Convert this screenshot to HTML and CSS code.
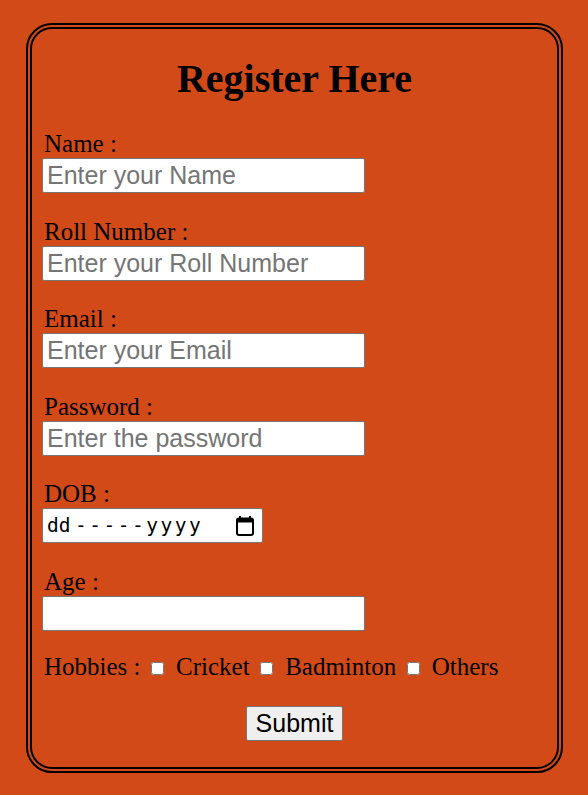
FILE: index.html
```html
<!DOCTYPE html>
<html lang="en">
<head>
<meta charset="utf-8">
<title>Register Here</title>
<link rel="stylesheet" href="styles.css">
</head>
<body>
<form class="card">
  <h1 class="title">Register Here</h1>
  <div class="fields">
    <div class="field">
      <label class="label" for="name">Name :</label>
      <input class="input" id="name" type="text" placeholder="Enter your Name">
    </div>
    <div class="field">
      <label class="label" for="roll">Roll Number :</label>
      <input class="input" id="roll" type="text" placeholder="Enter your Roll Number">
    </div>
    <div class="field">
      <label class="label" for="email">Email :</label>
      <input class="input" id="email" type="text" placeholder="Enter your Email">
    </div>
    <div class="field">
      <label class="label" for="pass">Password :</label>
      <input class="input" id="pass" type="text" placeholder="Enter the password">
    </div>
    <div class="field">
      <label class="label">DOB :</label>
      <div class="date-field">
        <span class="date-text"><span class="date-dd">dd</span><span class="date-rest">-----yyyy</span></span>
        <svg class="cal-icon" viewBox="0 0 18 20" width="18" height="20" aria-hidden="true">
          <rect x="3" y="0" width="2" height="4" fill="#000"/>
          <rect x="13" y="0" width="2" height="4" fill="#000"/>
          <rect x="1" y="2.5" width="16" height="16.5" rx="2" fill="none" stroke="#000" stroke-width="2"/>
          <rect x="1" y="2.5" width="16" height="4" fill="#000"/>
        </svg>
      </div>
    </div>
    <div class="field">
      <label class="label" for="age">Age :</label>
      <input class="input" id="age" type="text">
    </div>
  </div>
  <div class="hobbies">Hobbies : <input class="check" type="checkbox" id="h1"> <label for="h1">Cricket</label> <input class="check" type="checkbox" id="h2"> <label for="h2">Badminton</label> <input class="check" type="checkbox" id="h3"> <label for="h3">Others</label></div>
  <div class="actions">
    <button class="submit" type="button">Submit</button>
  </div>
</form>
</body>
</html>
```

FILE: styles.css
```css
html, body {
  margin: 0;
  padding: 0;
}

body {
  background: #d34a19;
  padding: 23px 25px 22px 26px;
  font-family: "Liberation Serif", "Times New Roman", serif;
  color: #000;
}

.card {
  box-sizing: border-box;
  width: 537px;
  border: 6px double #000;
  border-radius: 26px;
  padding: 28px 10px 26px 10px;
}

.title {
  margin: 0 0 29px;
  font-size: 40px;
  font-weight: bold;
  line-height: 44px;
  text-align: center;
}

.fields {
  display: flex;
  flex-direction: column;
  gap: 24.6px;
}

.field {
  display: flex;
  flex-direction: column;
  align-items: flex-start;
}

.label {
  font-size: 25px;
  line-height: 28px;
  padding-left: 2px;
}

.input {
  box-sizing: border-box;
  width: 323px;
  height: 35px;
  margin: 0;
  padding: 0 4px;
  border: 1px solid #767676;
  border-radius: 2px;
  background: #fff;
  font-family: "Liberation Sans", Arial, sans-serif;
  font-size: 25px;
  color: #000;
  outline: none;
}

.input::placeholder {
  color: #757575;
}

.date-field {
  box-sizing: border-box;
  width: 221px;
  height: 35px;
  border: 1px solid #767676;
  border-radius: 2px;
  background: #fff;
  display: flex;
  align-items: center;
  justify-content: space-between;
  padding: 0 8px 0 4px;
}

.date-text {
  font-family: "DejaVu Sans Mono", monospace;
  font-size: 19.5px;
  color: #000;
  white-space: nowrap;
}

.date-rest {
  margin-left: 4.5px;
  letter-spacing: 2.5px;
}

.cal-icon {
  display: block;
}

.hobbies {
  margin-top: 22px;
  font-size: 25px;
  line-height: 28px;
  padding-left: 2px;
}

.check {
  margin: 3px 5.5px 3px 4.5px;
  width: 13px;
  height: 13px;
}

.actions {
  margin-top: 25px;
  display: flex;
  justify-content: center;
}

.submit {
  box-sizing: border-box;
  width: 97px;
  height: 35px;
  margin: 0;
  padding: 0;
  font-family: "Liberation Sans", Arial, sans-serif;
  font-size: 25px;
  color: #000;
  background: #efefef;
  border: 1px solid #767676;
  border-radius: 2px;
}
```
